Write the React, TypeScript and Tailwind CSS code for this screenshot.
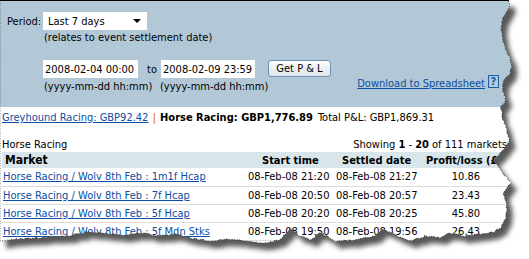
import React from 'react';

const font = { fontFamily: '"DejaVu Sans Condensed", "DejaVu Sans", Tahoma, sans-serif' };

const rows = [
  { market: 'Horse Racing / Wolv 8th Feb : 1m1f Hcap', start: '08-Feb-08 21:20', settled: '08-Feb-08 21:27', pl: '10.86' },
  { market: 'Horse Racing / Wolv 8th Feb : 7f Hcap', start: '08-Feb-08 20:50', settled: '08-Feb-08 20:57', pl: '23.43' },
  { market: 'Horse Racing / Wolv 8th Feb : 5f Hcap', start: '08-Feb-08 20:20', settled: '08-Feb-08 20:25', pl: '45.80' },
  { market: 'Horse Racing / Wolv 8th Feb : 5f Mdn Stks', start: '08-Feb-08 19:50', settled: '08-Feb-08 19:56', pl: '26.43' },
];

// torn paper outline
const right: [number, number][] = [
  [509, 0], [510, 6], [506, 13], [502, 20], [501, 28], [503, 38], [505, 48], [509, 56], [512, 66], [509, 74],
  [503, 82], [503, 90], [506, 99], [501, 108], [503, 120], [507, 130], [510, 142], [501, 152], [493, 160],
  [502, 172], [511, 183], [503, 193], [507, 205], [506, 218], [500, 228], [494, 232],
];
const bottom: [number, number][] = [
  [480, 234], [465, 236], [450, 233], [440, 238], [425, 236], [410, 241], [400, 237], [390, 232], [383, 229],
  [375, 236], [355, 240], [335, 241], [320, 232], [312, 240], [300, 236], [290, 229], [280, 240], [265, 243],
  [250, 242], [230, 239], [210, 241], [190, 238], [175, 234], [160, 236], [140, 233], [120, 235], [100, 233],
  [85, 232], [70, 236], [50, 237], [30, 238], [10, 240], [0, 241],
];

function jagged(pts: [number, number][]) {
  let seed = 7;
  const rnd = () => {
    seed = (seed * 9301 + 49297) % 233280;
    return seed / 233280 - 0.5;
  };
  const out: string[] = [];
  for (let i = 0; i < pts.length - 1; i++) {
    const [x1, y1] = pts[i];
    const [x2, y2] = pts[i + 1];
    const steps = Math.max(1, Math.round(Math.hypot(x2 - x1, y2 - y1) / 2));
    for (let s = 0; s < steps; s++) {
      const t = s / steps;
      out.push(`${(x1 + (x2 - x1) * t + rnd() * 1.6).toFixed(1)},${(y1 + (y2 - y1) * t + rnd() * 1.6).toFixed(1)}`);
    }
  }
  const last = pts[pts.length - 1];
  out.push(`${last[0]},${last[1]}`);
  return out;
}

const paper = `M0,0 L${jagged([...right, ...bottom]).join(' L')} Z`;

function TornEdge() {
  return (
    <svg className="absolute inset-0 pointer-events-none" width={529} height={259}>
      <defs>
        <filter id="blur" x="-10%" y="-10%" width="120%" height="120%">
          <feGaussianBlur stdDeviation="2.6" />
        </filter>
        <mask id="outside">
          <rect width={529} height={259} fill="#fff" />
          <path d={paper} fill="#000" />
        </mask>
      </defs>
      <path d={`M0,0 H529 V259 H0 Z ${paper}`} fill="#fff" fillRule="evenodd" />
      <g mask="url(#outside)">
        <path d={paper} transform="translate(6,7)" fill="#3a3a3a" filter="url(#blur)" opacity={0.85} />
      </g>
      <path d={paper} fill="none" stroke="#000" strokeWidth={0.8} strokeDasharray="1 1.5" opacity={0.8} />
    </svg>
  );
}

export default function App() {
  return (
    <div className="relative w-[529px] h-[259px] overflow-hidden bg-white text-[11px] leading-[13px] text-black" style={font}>
      <div className="border-t border-black">
        <div className="h-[106px] bg-[#b3c8d6] pt-[11px] pl-[7px]">
          <div className="flex items-center">
            <span className="w-[36px]">Period:</span>
            <div className="w-[104px] h-[18px] bg-white flex items-center justify-between pl-[5px] pr-[6px]">
              <span>Last 7 days</span>
              <span className="w-0 h-0 border-l-[4px] border-r-[4px] border-t-[4px] border-l-transparent border-r-transparent border-t-black" />
            </div>
          </div>
          <div className="ml-[37px] mt-[1px]">(relates to event settlement date)</div>
          <div className="flex items-center mt-[16px] ml-[36px]">
            <div className="w-[95px] h-[18px] bg-white flex items-center pl-[2px]">2008-02-04 00:00</div>
            <span className="ml-[9px] w-[14px]">to</span>
            <div className="w-[94px] h-[18px] bg-white flex items-center pl-[2px]">2008-02-09 23:59</div>
            <button className="ml-[13px] -mt-[1px] w-[63px] h-[17px] rounded-[3px] border border-[#6f93b3] bg-gradient-to-b from-[#fbfcfd] to-[#dfe5ea] flex items-center justify-center">Get P &amp; L</button>
          </div>
          <div className="flex items-center ml-[37px] mt-[2px]">
            <span className="w-[116px]">(yyyy-mm-dd hh:mm)</span>
            <span>(yyyy-mm-dd hh:mm)</span>
            <span className="ml-[89px] -mt-[6px] text-[#0b4ea2] underline">Download to Spreadsheet</span>
            <span className="ml-[3px] -mt-[10px] w-[11px] h-[13px] border border-[#1a5fa8] text-[#1a5fa8] font-bold flex items-center justify-center">?</span>
          </div>
        </div>
        <div className="pl-[2px] pt-[4px] flex items-center">
          <span className="text-[#0b4ea2] underline">Greyhound Racing: GBP92.42</span>
          <span className="mx-[4px] text-[#e08a1e] font-bold">|</span>
          <span className="font-bold">Horse Racing: GBP1,776.89</span>
          <span className="ml-[5px]">Total P&amp;L: GBP1,869.31</span>
        </div>
        <div className="flex justify-between items-end mt-[14px] pl-[2px] w-[507px]">
          <span>Horse Racing</span>
          <span>
            Showing <b>1</b> - <b>20</b> of 111 markets
          </span>
        </div>
        <table className="ml-[2px] mt-[1px] border-collapse table-fixed w-[520px]">
          <colgroup>
            <col className="w-[246px]" />
            <col className="w-[86px]" />
            <col className="w-[86px]" />
            <col className="w-[102px]" />
          </colgroup>
          <thead>
            <tr className="bg-[#d8e5eb] h-[16px]">
              <th className="text-left pl-[3px] font-bold text-[12px]">Market</th>
              <th className="font-bold text-left pl-[14px]">Start time</th>
              <th className="font-bold text-left pl-[8px]">Settled date</th>
              <th className="font-bold text-left pl-[6px] whitespace-nowrap">Profit/loss (£)</th>
            </tr>
          </thead>
          <tbody>
            {rows.map((r) => (
              <tr key={r.market} className="h-[18px] border-b border-[#dcdcdc]">
                <td className="pl-[1px] whitespace-nowrap">
                  <span className="text-[#0b4ea2] underline">{r.market}</span>
                </td>
                <td className="whitespace-nowrap">{r.start}</td>
                <td className="whitespace-nowrap pl-[2px]">{r.settled}</td>
                <td className="text-center pr-[10px]">{r.pl}</td>
              </tr>
            ))}
          </tbody>
        </table>
      </div>
      <TornEdge />
    </div>
  );
}
